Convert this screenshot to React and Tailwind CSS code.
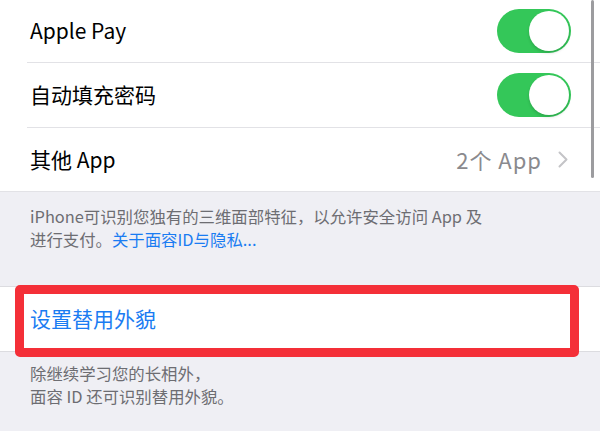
import React from "react";

const font = { fontFamily: '"Noto Sans CJK SC", "Noto Sans", sans-serif' };

const Toggle = () => (
  <div className="w-[74px] h-[44px] rounded-full bg-[#34c759] flex items-center justify-end px-[2px]">
    <div className="w-[40px] h-[40px] rounded-full bg-white shadow-[0_2px_3px_rgba(0,0,0,0.15)]" />
  </div>
);

const Chevron = () => (
  <svg width="10" height="17" viewBox="0 0 10 17" fill="none">
    <path d="M1.5 1.5 L8.5 8.5 L1.5 15.5" stroke="#c4c4c7" strokeWidth="2" strokeLinecap="round" strokeLinejoin="round" />
  </svg>
);

export default function App() {
  return (
    <div className="relative w-[600px] h-[431px] overflow-hidden bg-[#efeff4]" style={font}>
      <div className="bg-white border-b border-[#e2e2e6]">
        <div className="h-[62px] flex items-center justify-between pl-[30px] pr-[29px]">
          <span className="text-[21px] text-black">Apple Pay</span>
          <Toggle />
        </div>
        <div className="ml-[27px] h-px bg-[#e2e2e6]" />
        <div className="h-[64px] flex items-center justify-between pl-[30px] pr-[29px]">
          <span className="text-[21px] text-black">自动填充密码</span>
          <Toggle />
        </div>
        <div className="ml-[27px] h-px bg-[#e2e2e6]" />
        <div className="h-[63px] flex items-center justify-between pl-[30px] pr-[32px]">
          <span className="text-[21px] text-black">其他 App</span>
          <div className="flex items-center gap-[16px]">
            <span className="text-[22px] tracking-[1px] text-[#8a8a8e]">2个 App</span>
            <Chevron />
          </div>
        </div>
      </div>

      <div className="h-[94px] pt-[13px] pl-[30px] pr-[10px] text-[16.4px] leading-[23px] text-[#6d6d72]">
        <p>iPhone可识别您独有的三维面部特征，以允许安全访问 App 及</p>
        <p>
          进行支付。<span className="text-[#1a7cf2]">关于面容ID与隐私...</span>
        </p>
      </div>

      <div className="relative bg-white border-y border-[#dcdce0]">
        <div className="h-[64px] flex items-center pl-[30px]">
          <span className="text-[21px] text-[#1a7cf2]">设置替用外貌</span>
        </div>
        <div className="absolute left-[15px] top-[-2px] w-[564px] h-[72px] border-[9px] border-[#f42f38] rounded-[5px]" />
      </div>

      <div className="pt-[10px] pl-[30px] text-[16.4px] leading-[23px] text-[#6d6d72]">
        <p>除继续学习您的长相外，</p>
        <p>面容 ID 还可识别替用外貌。</p>
      </div>

      <div className="absolute left-[591px] top-0 w-[3px] h-[178px] rounded-full bg-[#9c9c9f]" />
    </div>
  );
}
